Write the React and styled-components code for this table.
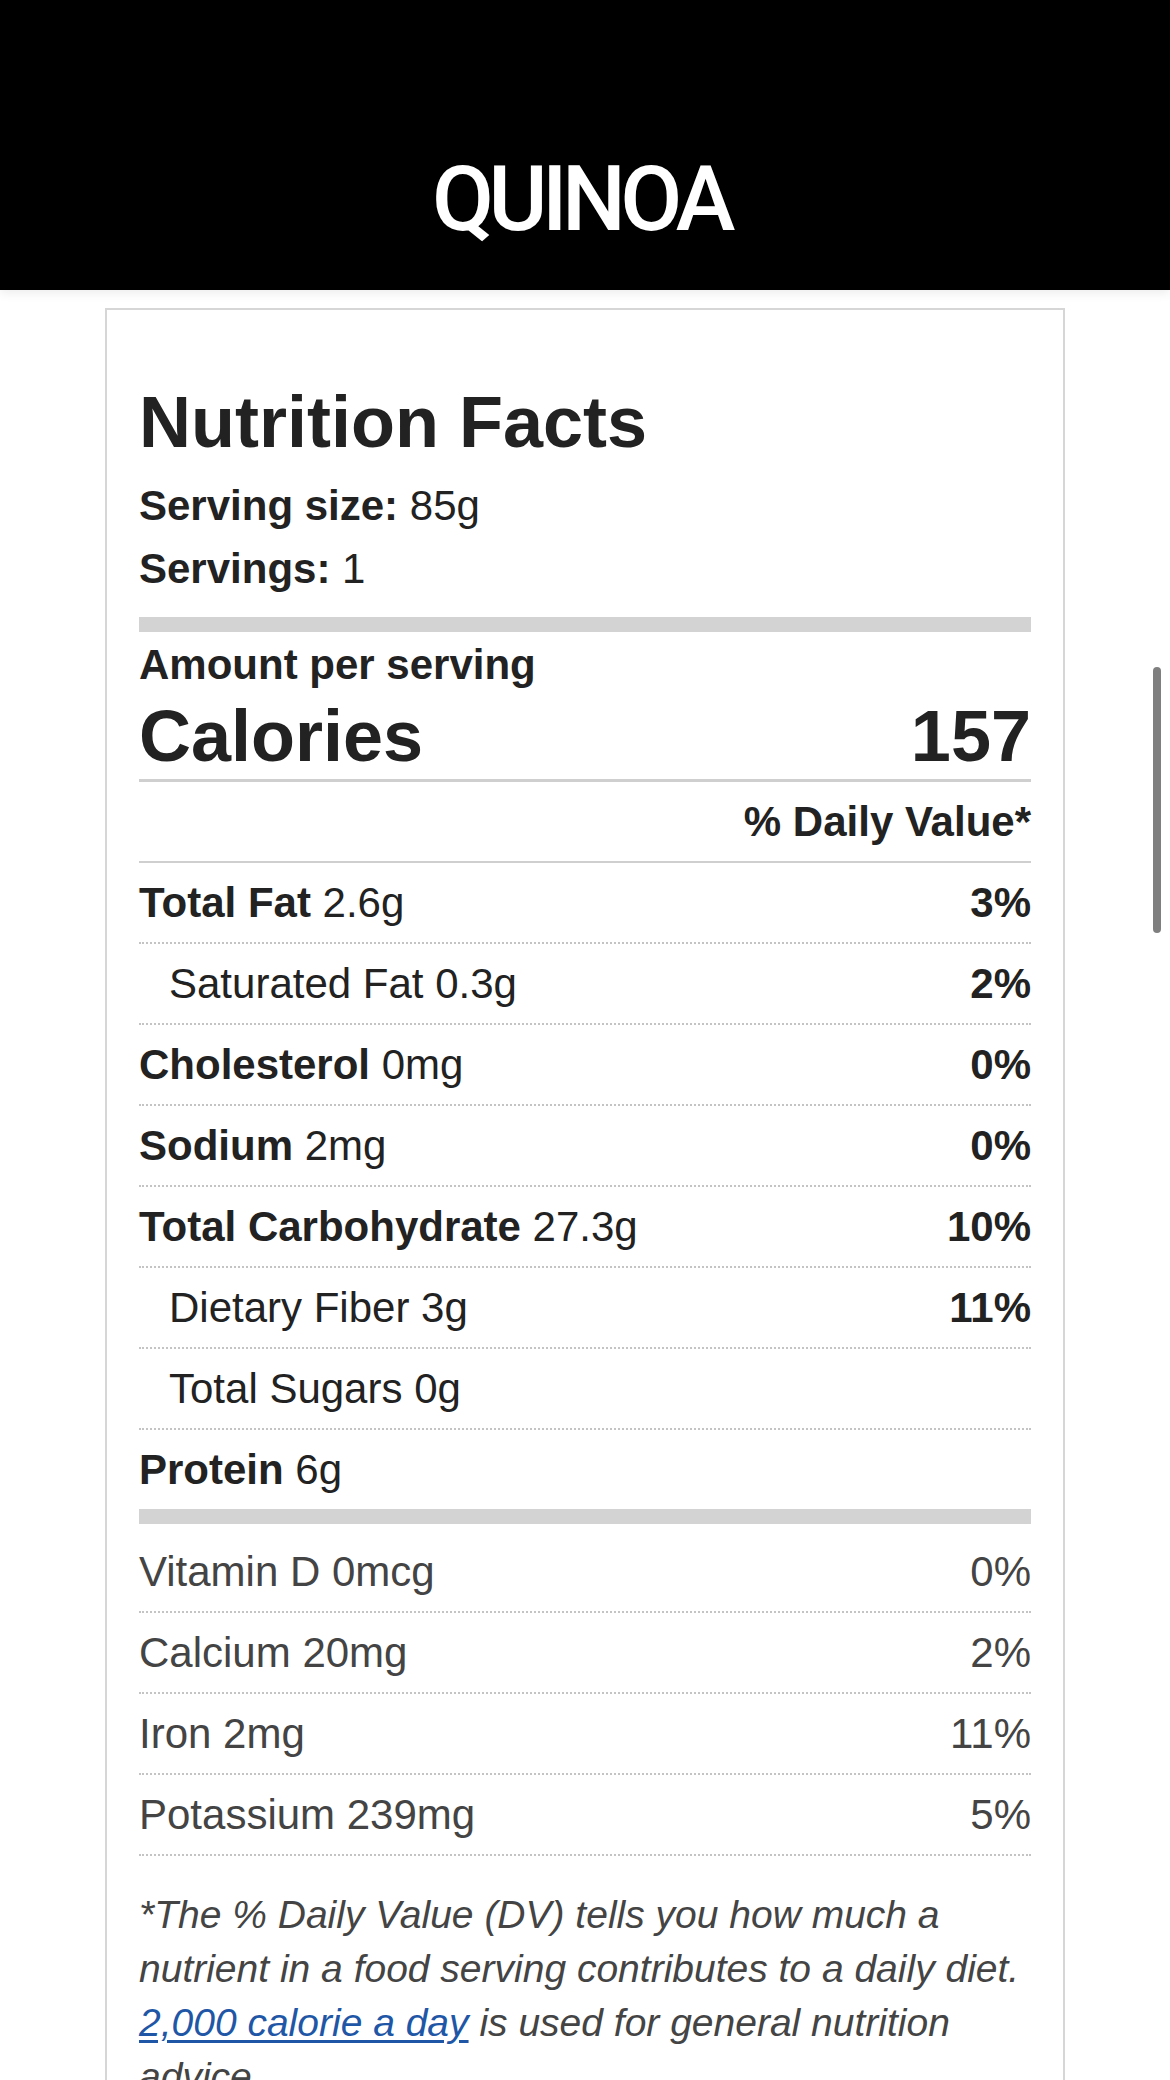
import React from "react";
import styled, { createGlobalStyle } from "styled-components";

const GlobalStyle = createGlobalStyle`
  html, body {
    margin: 0;
    padding: 0;
    background: #ffffff;
    overflow: hidden;
  }
  body {
    font-family: "Liberation Sans", Arial, Helvetica, sans-serif;
    color: #222222;
  }
  * { box-sizing: border-box; }
`;

const Page = styled.div`
  position: relative;
  width: 1170px;
  height: 2080px;
  overflow: hidden;
  background: #ffffff;
`;

const Header = styled.header`
  height: 290px;
  background: #000000;
  display: flex;
  justify-content: center;
  align-items: flex-end;
  padding-bottom: 45px;
  box-shadow: 0 3px 10px rgba(0, 0, 0, 0.08);
  position: relative;
  z-index: 1;
`;

const HeaderTitle = styled.h1`
  margin: 0;
  font-family: Roboto, "Liberation Sans", sans-serif;
  font-weight: 500;
  font-size: 90px;
  line-height: 90px;
  letter-spacing: -5.5px;
  padding-right: 8px;
  color: #ffffff;
`;

const Card = styled.section`
  width: 960px;
  margin: 18px auto 0;
  border: 2px solid #d6d6d6;
  padding: 0 32px 40px;
`;

const Title = styled.h2`
  margin: 69px 0 0;
  font-size: 72px;
  line-height: 86px;
  font-weight: 700;
  color: #222222;
`;

const ServingLine = styled.div`
  font-size: 42px;
  line-height: 63px;
  color: #222222;
  &:first-of-type { margin-top: 9px; }
`;

const Bold = styled.span`
  font-weight: 700;
`;

const ThickBar = styled.div`
  height: 15px;
  background: #d3d3d3;
  margin-top: ${(p) => p.$top || 0}px;
  margin-bottom: ${(p) => p.$bottom || 0}px;
`;

const Amount = styled.div`
  margin-top: 8px;
  font-size: 42px;
  line-height: 50px;
  font-weight: 700;
`;

const CaloriesRow = styled.div`
  margin-top: 3px;
  display: flex;
  justify-content: space-between;
  font-size: 72px;
  line-height: 86px;
  font-weight: 700;
  border-bottom: 3px solid #cfcfcf;
`;

const DailyValueHead = styled.div`
  padding: 8px 0;
  text-align: right;
  font-size: 42px;
  line-height: 63px;
  font-weight: 700;
  border-bottom: 2px solid #cfcfcf;
`;

const Row = styled.div`
  display: flex;
  justify-content: space-between;
  align-items: center;
  padding: 8px 0 8px ${(p) => (p.$sub ? 30 : 0)}px;
  font-size: 42px;
  line-height: 63px;
  color: ${(p) => (p.$muted ? "#444444" : "#222222")};
  border-bottom: ${(p) => (p.$noBorder ? "none" : "2px dotted #c4c4c4")};
`;

const Percent = styled.span`
  font-weight: ${(p) => (p.$bold ? 700 : 400)};
`;

const Vitamins = styled.div`
  margin-top: 8px;
`;

const Footnote = styled.p`
  margin: 32px 0 0;
  font-size: 39px;
  line-height: 54px;
  font-style: italic;
  color: #444444;
`;

const Link = styled.a`
  color: #1f57a6;
  text-decoration: underline;
  text-decoration-thickness: 3px;
  text-underline-offset: 4px;
`;

const ScrollThumb = styled.div`
  position: absolute;
  right: 9px;
  top: 667px;
  width: 8px;
  height: 266px;
  border-radius: 4px;
  background: #7f7f7f;
`;

const macros = [
  { label: "Total Fat", amount: "2.6g", dv: "3%" },
  { label: "Saturated Fat", amount: "0.3g", dv: "2%", sub: true },
  { label: "Cholesterol", amount: "0mg", dv: "0%" },
  { label: "Sodium", amount: "2mg", dv: "0%" },
  { label: "Total Carbohydrate", amount: "27.3g", dv: "10%" },
  { label: "Dietary Fiber", amount: "3g", dv: "11%", sub: true },
  { label: "Total Sugars", amount: "0g", sub: true },
  { label: "Protein", amount: "6g", last: true },
];

const vitamins = [
  { label: "Vitamin D", amount: "0mcg", dv: "0%" },
  { label: "Calcium", amount: "20mg", dv: "2%" },
  { label: "Iron", amount: "2mg", dv: "11%" },
  { label: "Potassium", amount: "239mg", dv: "5%" },
];

export default function App() {
  return (
    <Page>
      <GlobalStyle />
      <Header>
        <HeaderTitle>QUINOA</HeaderTitle>
      </Header>
      <Card>
        <Title>Nutrition Facts</Title>
        <ServingLine>
          <Bold>Serving size:</Bold> 85g
        </ServingLine>
        <ServingLine>
          <Bold>Servings:</Bold> 1
        </ServingLine>
        <ThickBar $top={17} />
        <Amount>Amount per serving</Amount>
        <CaloriesRow>
          <span>Calories</span>
          <span>157</span>
        </CaloriesRow>
        <DailyValueHead>% Daily Value*</DailyValueHead>
        {macros.map((m) => (
          <Row key={m.label} $sub={m.sub} $noBorder={m.last}>
            <span>
              {m.sub ? m.label : <Bold>{m.label}</Bold>} {m.amount}
            </span>
            {m.dv && <Percent $bold>{m.dv}</Percent>}
          </Row>
        ))}
        <ThickBar />
        <Vitamins>
          {vitamins.map((v) => (
            <Row key={v.label} $muted>
              <span>
                {v.label} {v.amount}
              </span>
              <Percent>{v.dv}</Percent>
            </Row>
          ))}
        </Vitamins>
        <Footnote>
          *The % Daily Value (DV) tells you how much a nutrient in a food
          serving contributes to a daily diet.{" "}
          <Link href="#">2,000 calorie a day</Link> is used for general
          nutrition advice.
        </Footnote>
      </Card>
      <ScrollThumb />
    </Page>
  );
}
